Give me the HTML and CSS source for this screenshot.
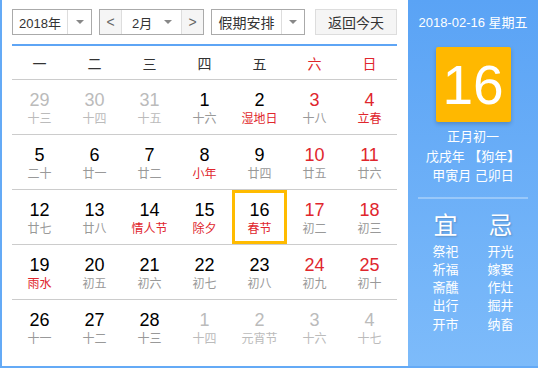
FILE: index.html
```html
<!DOCTYPE html>
<html lang="zh-CN">
<head>
    <meta charset="UTF-8">
    <title>万年历</title>
    <link rel="stylesheet" href="styles.css">
</head>
<body>
    <div class="calendar">
        <div class="main">
            <div class="toolbar">
                <div class="select year-select">
                    <span class="select-text">2018年</span>
                    <span class="select-arrow"></span>
                </div>
                <div class="month-group">
                    <span class="nav-btn">&lt;</span>
                    <div class="month-select">
                        <span>2月</span>
                        <span class="small-arrow"></span>
                    </div>
                    <span class="nav-btn">&gt;</span>
                </div>
                <div class="select holiday-select">
                    <span class="select-text">假期安排</span>
                    <span class="select-arrow"></span>
                </div>
                <div class="today-btn">返回今天</div>
            </div>
            <div class="weekdays">
                <span>一</span><span>二</span><span>三</span><span>四</span><span>五</span><span class="red">六</span><span class="red">日</span>
            </div>
            <div class="days" id="days"></div>
        </div>
        <div class="side">
            <div class="side-date">2018-02-16 星期五</div>
            <div class="big-day">16</div>
            <div class="lunar-info">
                <div>正月初一</div>
                <div>戊戌年 【狗年】</div>
                <div>甲寅月 己卯日</div>
            </div>
            <div class="divider"></div>
            <div class="almanac">
                <div class="almanac-col">
                    <div class="almanac-title">宜</div>
                    <div>祭祀</div>
                    <div>祈福</div>
                    <div>斋醮</div>
                    <div>出行</div>
                    <div>开市</div>
                </div>
                <div class="almanac-col">
                    <div class="almanac-title">忌</div>
                    <div>开光</div>
                    <div>嫁娶</div>
                    <div>作灶</div>
                    <div>掘井</div>
                    <div>纳畜</div>
                </div>
            </div>
        </div>
    </div>
    <script>
        // [day, lunar, flags] flags: o = other month, w = weekend, f = festival, s = selected
        const weeks = [
            [[29, '十三', 'o'], [30, '十四', 'o'], [31, '十五', 'o'], [1, '十六'], [2, '湿地日', 'f'], [3, '十八', 'w'], [4, '立春', 'wf']],
            [[5, '二十'], [6, '廿一'], [7, '廿二'], [8, '小年', 'f'], [9, '廿四'], [10, '廿五', 'w'], [11, '廿六', 'w']],
            [[12, '廿七'], [13, '廿八'], [14, '情人节', 'f'], [15, '除夕', 'f'], [16, '春节', 'fs'], [17, '初二', 'w'], [18, '初三', 'w']],
            [[19, '雨水', 'f'], [20, '初五'], [21, '初六'], [22, '初七'], [23, '初八'], [24, '初九', 'w'], [25, '初十', 'w']],
            [[26, '十一'], [27, '十二'], [28, '十三'], [1, '十四', 'o'], [2, '元宵节', 'o'], [3, '十六', 'o'], [4, '十七', 'o']]
        ];

        const days = document.getElementById('days');
        weeks.forEach(week => {
            const row = document.createElement('div');
            row.className = 'week';
            week.forEach(([num, lunar, flags = '']) => {
                const cell = document.createElement('div');
                cell.className = 'day';
                if (flags.includes('o')) cell.classList.add('other');
                if (flags.includes('w')) cell.classList.add('weekend');
                if (flags.includes('f')) cell.classList.add('festival');
                if (flags.includes('s')) cell.classList.add('selected');
                cell.innerHTML = `<span class="num">${num}</span><span class="lunar">${lunar}</span>`;
                row.appendChild(cell);
            });
            days.appendChild(row);
        });
    </script>
</body>
</html>
```
FILE: styles.css
```css
body {
    margin: 0;
    font-family: "Liberation Sans", "Noto Sans CJK SC", sans-serif;
    background: #fff;
}
.calendar {
    display: flex;
    width: 536px;
    height: 366px;
    border-left: 2px solid #64aaf6;
    border-bottom: 2px solid #64aaf6;
}
.main {
    width: 385px;
    padding: 9px 11px 0 10px;
}
.toolbar {
    display: flex;
    height: 26px;
    font-size: 13px;
    color: #333;
}
.select {
    display: flex;
    border: 1px solid #aaa;
    box-sizing: border-box;
    height: 26px;
}
.select-text {
    display: flex;
    align-items: center;
    justify-content: center;
    border-right: 1px solid #ddd;
}
.select-arrow,
.small-arrow {
    display: flex;
    align-items: center;
    justify-content: center;
}
.select-arrow {
    flex: 1;
}
.select-arrow::after,
.small-arrow::after {
    content: "";
    border-left: 4px solid transparent;
    border-right: 4px solid transparent;
    border-top: 4px solid #888;
}
.year-select {
    width: 80px;
}
.year-select .select-text {
    width: 54px;
}
.month-group {
    display: flex;
    width: 105px;
    height: 26px;
    box-sizing: border-box;
    border: 1px solid #aaa;
    margin-left: 7px;
}
.nav-btn {
    width: 21px;
    display: flex;
    align-items: center;
    justify-content: center;
    background: #f5f5f5;
    color: #666;
    font-size: 14px;
}
.month-select {
    flex: 1;
    display: flex;
    align-items: center;
    justify-content: space-between;
    padding: 0 9px 0 10px;
    border-left: 1px solid #ddd;
    border-right: 1px solid #ddd;
}
.holiday-select {
    width: 94px;
    margin-left: 7px;
}
.holiday-select .select-text {
    width: 69px;
    font-size: 14px;
}
.today-btn {
    width: 82px;
    height: 26px;
    box-sizing: border-box;
    margin-left: 10px;
    border: 1px solid #ddd;
    background: #f5f5f5;
    display: flex;
    align-items: center;
    justify-content: center;
    font-size: 14px;
}
.weekdays {
    display: grid;
    grid-template-columns: repeat(7, 55px);
    margin-top: 9px;
    border-top: 2px solid #5ea5f5;
    border-bottom: 1px solid #ccc;
    height: 33px;
    align-items: center;
    text-align: center;
    font-size: 14px;
    color: #333;
}
.red {
    color: #e0262d;
}
.week {
    display: grid;
    grid-template-columns: repeat(7, 55px);
    border-bottom: 1px solid #ccc;
}
.week:last-child {
    border-bottom: none;
}
.day {
    height: 54px;
    box-sizing: border-box;
    padding-top: 10px;
    display: flex;
    flex-direction: column;
    align-items: center;
}
.num {
    font-size: 18px;
    line-height: 20px;
    color: #000;
}
.lunar {
    font-size: 12px;
    line-height: 18px;
    color: #999;
}
.weekend .num {
    color: #e0262d;
}
.festival .lunar {
    color: #e0262d;
}
.other .num,
.other .lunar {
    color: #bbb;
}
.selected {
    border: 3px solid #ffbb00;
    padding-top: 7px;
    width: 55px;
}
.side {
    width: 130px;
    background: linear-gradient(#5aa3f5, #7dbbfa);
    color: #fff;
    display: flex;
    flex-direction: column;
    align-items: center;
}
.side-date {
    margin-top: 15px;
    font-size: 13px;
    line-height: 16px;
}
.big-day {
    margin-top: 16px;
    width: 75px;
    height: 75px;
    background: #ffb800;
    border-radius: 2px;
    box-shadow: 0 2px 4px rgba(0, 0, 0, 0.2);
    display: flex;
    align-items: center;
    justify-content: center;
    font-size: 55px;
}
.lunar-info {
    margin-top: 5px;
    font-size: 13px;
    line-height: 19.5px;
    text-align: center;
}
.divider {
    margin-top: 11px;
    width: 110px;
    height: 2px;
    background: rgba(255, 255, 255, 0.3);
}
.almanac {
    display: flex;
    margin-top: 13px;
}
.almanac-col {
    width: 55px;
    text-align: center;
    font-size: 13px;
    line-height: 18.3px;
}
.almanac-title {
    font-size: 24px;
    line-height: 28px;
    margin-bottom: 3px;
    text-shadow: 1px 1px 2px rgba(0, 0, 0, 0.2);
}
```
